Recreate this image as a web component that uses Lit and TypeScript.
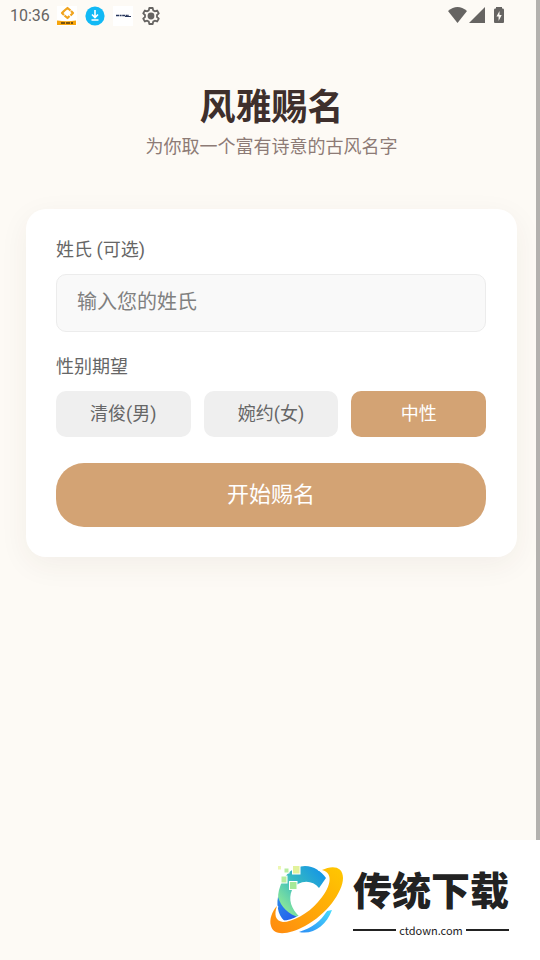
import { LitElement, html, css } from "lit";
import { customElement, state } from "lit/decorators.js";

const base = css`
  :host {
    display: block;
    font-family: Roboto, "Noto Sans CJK SC", sans-serif;
  }
  * {
    box-sizing: border-box;
  }
  svg {
    display: block;
  }
`;

@customElement("status-bar")
class StatusBar extends LitElement {
  static styles = [
    base,
    css`
      .bar {
        display: flex;
        align-items: center;
        height: 32px;
        padding: 0 30px 0 10px;
        color: #666462;
      }
      .time {
        font-size: 16px;
        line-height: 20px;
        width: 47px;
      }
      .apps {
        display: flex;
        gap: 8px;
        flex: 1;
      }
      .signals {
        display: flex;
        align-items: center;
      }
    `,
  ];

  render() {
    return html`
      <header class="bar">
        <span class="time">10:36</span>
        <div class="apps">
          <svg width="20" height="20" viewBox="0 0 20 20" aria-hidden="true">
            <rect width="20" height="20" fill="#fff" />
            <path d="M7.500 4.500 L10.500 2 L13.500 4.500 M14 5 L16 7 L13.500 9.500 M12.500 10 L10.500 12 L7.500 9.500 M7 9 L5 7 L7.500 4.500" fill="none" stroke="#f0a31c" stroke-width="2.2" stroke-linejoin="round" />
            <path d="M0 14.500 Q10 16 19 14.500 V19 H0 Z" fill="#f7a50c" />
            <path d="M4 17 H8 M9 17 H13 M14 17 H16" stroke="#54380d" stroke-width="1.5" />
          </svg>
          <svg width="20" height="20" viewBox="0 0 20 20" aria-hidden="true">
            <circle cx="10" cy="10" r="9.6" fill="#12b9f5" />
            <path d="M10 4 V11 M7 8.500 L10 11.500 L13 8.500 M6.500 14 H13.500" fill="none" stroke="#fff" stroke-width="1.6" />
          </svg>
          <svg width="20" height="20" viewBox="0 0 20 20" aria-hidden="true">
            <rect width="20" height="20" fill="#fff" />
            <path d="M3 9.500 H16" stroke="#26355c" stroke-width="1.6" stroke-dasharray="3 .6 2 .6" />
            <path d="M12 10.500 H18" stroke="#26355c" />
          </svg>
          <svg width="20" height="20" viewBox="0 0 20 20" aria-hidden="true">
            <path
              d="M8.300 2 H11.700 L12.200 4.400 L13.800 5.300 L16.100 4.500 L17.800 7.400 L16 9 V11 L17.800 12.600 L16.100 15.500 L13.800 14.700 L12.200 15.600 L11.700 18 H8.300 L7.800 15.600 L6.200 14.700 L3.900 15.500 L2.200 12.600 L4 11 V9 L2.200 7.400 L3.900 4.500 L6.200 5.300 L7.800 4.400 Z"
              fill="none" stroke="#666462" stroke-width="1.8" stroke-linejoin="round"
            />
            <circle cx="10" cy="10" r="3.4" fill="#666462" />
          </svg>
        </div>
        <div class="signals">
          <svg width="58" height="20" viewBox="0 0 58 20" fill="#666462" aria-hidden="true">
            <path d="M0 5 Q9.500 -3 19 5 L9.500 17 Z" />
            <path d="M37 1 V17 H21 Z" />
            <path d="M48 1 H54 V2.500 H55 Q56 2.500 56 4 V16 Q56 17 55 17 H47 Q46 17 46 16 V4 Q46 2.500 47 2.500 H48 Z" />
            <path d="M51.500 5 L48.500 10.500 H50.600 V15 L53.700 9 H51.500 Z" fill="#fdfaf5" />
          </svg>
        </div>
      </header>
    `;
  }
}

@customElement("naming-form")
class NamingForm extends LitElement {
  @state() private gender = "中性";

  static styles = [
    base,
    css`
      .card {
        background: #fff;
        border-radius: 20px;
        padding: 27px 31px 30px 30px;
        box-shadow: 0 8px 30px rgba(70, 50, 40, 0.06);
      }
      .label {
        display: block;
        padding: 0;
        font-size: 18px;
        line-height: 28px;
        color: #666;
      }
      .text {
        display: block;
        width: 100%;
        height: 58px;
        margin: 10px 0 21px;
        padding: 0 20px 2px;
        border: 1px solid #ececec;
        border-radius: 10px;
        background: #f9f9f9;
        color: #444;
        font: inherit;
        font-size: 20px;
        outline: none;
      }
      .text::placeholder {
        color: #808080;
        opacity: 1;
      }
      .group {
        margin: 0;
        padding: 0;
        border: 0;
        min-width: 0;
      }
      .options {
        display: grid;
        grid-template-columns: repeat(3, 1fr);
        gap: 13px;
        margin: 10px 0 26px;
      }
      .option {
        display: flex;
        align-items: center;
        justify-content: center;
        height: 46px;
        border-radius: 10px;
        background: #efefef;
        color: #666;
        font-size: 18px;
        line-height: 28px;
        cursor: pointer;
      }
      .option:has(.radio:checked) {
        background: #d3a374;
        color: #fff;
      }
      .option:has(.radio:focus-visible) {
        outline: 2px solid #8d6e63;
      }
      .radio {
        appearance: none;
        position: absolute;
        width: 0;
        height: 0;
        margin: 0;
        outline: none;
      }
      .submit {
        display: block;
        width: 100%;
        height: 64px;
        padding: 0 0 6px;
        border: 0;
        border-radius: 28px;
        background: #d3a374;
        color: #fff;
        font: inherit;
        font-size: 22px;
        cursor: pointer;
      }
    `,
  ];

  render() {
    return html`
      <form class="card" @submit=${(e: Event) => e.preventDefault()}>
        <label class="label" for="surname">姓氏 (可选)</label>
        <input class="text" id="surname" type="text" placeholder="输入您的姓氏" />
        <fieldset class="group">
          <legend class="label">性别期望</legend>
          <div class="options">
            ${["清俊(男)", "婉约(女)", "中性"].map(
              (name) => html`
                <label class="option">
                  <input
                    class="radio"
                    type="radio"
                    name="gender"
                    .value=${name}
                    .checked=${this.gender === name}
                    @change=${() => (this.gender = name)}
                  />${name}
                </label>
              `
            )}
          </div>
        </fieldset>
        <button class="submit" type="submit">开始赐名</button>
      </form>
    `;
  }
}

@customElement("site-badge")
class SiteBadge extends LitElement {
  static styles = [
    base,
    css`
      .badge {
        display: flex;
        align-items: center;
        gap: 9px;
        width: 280px;
        height: 120px;
        padding: 0 31px 0 8px;
        background: #fff;
        color: #222;
      }
      .logo {
        flex: none;
      }
      .words {
        flex: 1;
      }
      .name {
        font-family: "Noto Sans CJK SC", sans-serif;
        font-size: 39px;
        font-weight: 900;
        line-height: 52px;
        white-space: nowrap;
      }
      .site {
        display: flex;
        align-items: center;
        gap: 3px;
        margin-top: 8px;
        font-family: "Noto Sans CJK SC", sans-serif;
        font-size: 11px;
        font-weight: 400;
        line-height: 16px;
      }
      .rule {
        flex: 1;
        height: 2px;
        background: #222;
      }
    `,
  ];

  render() {
    return html`
      <div class="badge">
        <svg class="logo" width="76" height="76" viewBox="8 22 76 76" aria-hidden="true">
          <defs>
            <linearGradient id="arc" x1="0" y1="1" x2="1" y2="0">
              <stop offset="0.200" stop-color="#86e59b" />
              <stop offset="0.550" stop-color="#35b9c2" />
              <stop offset="0.900" stop-color="#1697e4" />
            </linearGradient>
            <linearGradient id="leaf" x1="0" y1="0" x2="1" y2="1">
              <stop offset="0" stop-color="#2b8ae8" />
              <stop offset="1" stop-color="#2353ef" />
            </linearGradient>
            <linearGradient id="tail" x1="0" y1="1" x2="1" y2="0">
              <stop offset="0" stop-color="#2b8df5" />
              <stop offset="1" stop-color="#48dcfc" />
            </linearGradient>
            <linearGradient id="ring" x1="0" y1="1" x2="1" y2="0">
              <stop offset="0" stop-color="#ff8a10" />
              <stop offset="1" stop-color="#ffc800" />
            </linearGradient>
          </defs>
          <path d="M66 38 L59 48 C52 39 38 40 32 50 C28 59 31 69 40 77 L30 83 C20 77 16 62 19 50 C23 34 34 26 45 26 C54 26 61 31 66 38Z" fill="url(#arc)" />
          <path d="M18 57 C21 67 28 74 40 78 L27 83 C19 78 16 67 18 57Z" fill="url(#leaf)" />
          <path d="M72 70 C66 86 53 95 39 92 C52 88 61 81 67 71Z" fill="url(#tail)" />
          <path d="M62 30 C72 25 83 26 83 38 C83 52 66 75 45 86 C30 94 14 97 11 86 C9 80 12 71 17 66 C14 74 15 81 23 82 C32 82 48 74 58 62 C70 49 75 33 62 30Z" fill="url(#ring)" stroke="#fff" stroke-width="3" paint-order="stroke" />
          <g stroke="#fff" stroke-width="1">
            <rect x="32.500" y="25.500" width="7.500" height="8.500" fill="#e2f29b" />
            <rect x="24" y="28" width="5" height="5" fill="#b7ed9f" />
            <rect x="17.500" y="25.500" width="4" height="4.500" fill="#edf7b3" />
            <rect x="21" y="36" width="6" height="7" fill="#b7ed9f" />
            <rect x="29.500" y="41.500" width="7.500" height="8" fill="#a6e998" />
          </g>
        </svg>
        <div class="words">
          <div class="name">传统下载</div>
          <div class="site"><span class="rule"></span>ctdown.com<span class="rule"></span></div>
        </div>
      </div>
    `;
  }
}

@customElement("app-root")
class AppRoot extends LitElement {
  static styles = [
    base,
    css`
      :host {
        position: relative;
        display: flex;
        min-height: 100vh;
        background: #fdfaf5;
      }
      .page {
        flex: 1;
        min-width: 0;
      }
      .track {
        width: 4px;
        background: #b3b1ae;
      }
      .content {
        padding: 50px 19px 0 26px;
      }
      .intro {
        margin-bottom: 49px;
        text-align: center;
      }
      .title {
        margin: 0;
        font-size: 36px;
        font-weight: 700;
        line-height: 52px;
        color: #3e2f2c;
      }
      .subtitle {
        margin: 0;
        font-size: 18px;
        line-height: 26px;
        color: #8d7b76;
      }
      .corner {
        position: absolute;
        right: 0;
        bottom: 0;
      }
    `,
  ];

  render() {
    return html`
      <div class="page">
        <status-bar></status-bar>
        <main class="content">
          <div class="intro">
            <h1 class="title">风雅赐名</h1>
            <p class="subtitle">为你取一个富有诗意的古风名字</p>
          </div>
          <naming-form></naming-form>
        </main>
      </div>
      <div class="track"></div>
      <site-badge class="corner"></site-badge>
    `;
  }
}
